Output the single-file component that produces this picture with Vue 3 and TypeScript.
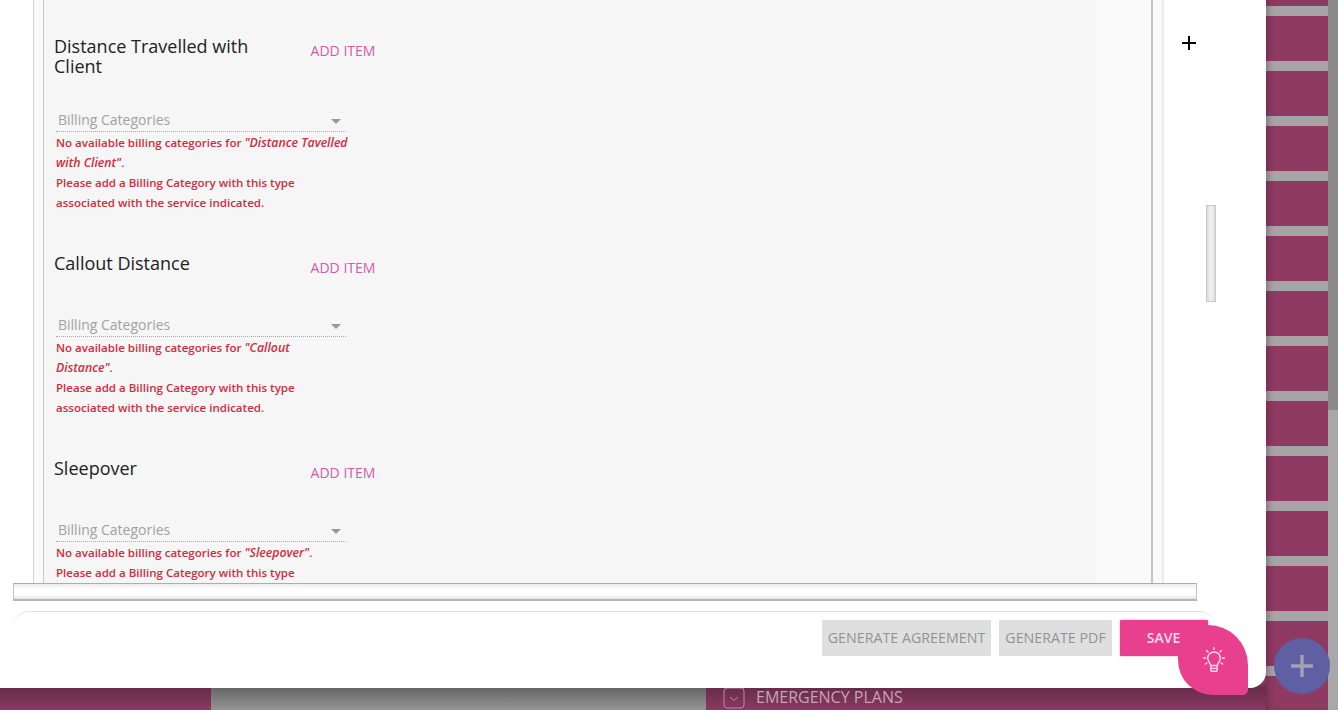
<script setup lang="ts">
interface Section {
  title: string
  missing: string
}
const sections: Section[] = [
  { title: 'Distance Travelled with Client', missing: '"Distance Tavelled with Client"' },
  { title: 'Callout Distance', missing: '"Callout Distance"' },
  { title: 'Sleepover', missing: '"Sleepover"' },
]
</script>

<template>
  <div class="page">
    <div class="backdrop">
      <div class="bg-pink bg-left"></div>
      <div class="bg-grey"></div>
      <div class="bg-pink bg-mid">
        <svg class="plans-icon" width="22" height="22" viewBox="0 0 22 22" fill="none">
          <rect x="1" y="1" width="20" height="20" rx="3" stroke="#b98aa5" stroke-width="1" />
          <path d="M7 10l4 3.5L15 10" stroke="#b98aa5" stroke-width="1" />
        </svg>
        <span class="plans-text">EMERGENCY PLANS</span>
      </div>
      <div class="bg-stripes"></div>
      <div class="bg-scroll"></div>
    </div>

    <div class="modal">
      <div class="viewport">
        <div class="frame">
          <div class="panel">
            <div class="content">
              <section v-for="s in sections" :key="s.title" class="block">
                <div class="head">
                  <h3 class="title">{{ s.title }}</h3>
                  <button class="add" type="button">ADD ITEM</button>
                </div>
                <div class="field">
                  <div class="select">
                    <span>Billing Categories</span>
                    <i class="caret"></i>
                  </div>
                  <p class="error">
                    No available billing categories for <em>{{ s.missing }}</em>.<br />
                    Please add a Billing Category with this type associated with the service indicated.
                  </p>
                </div>
              </section>
            </div>
          </div>
        </div>
      </div>
      <div class="hbar"></div>
      <div class="footer">
        <button class="btn grey wide" type="button">GENERATE AGREEMENT</button>
        <button class="btn grey pdf" type="button">GENERATE PDF</button>
        <button class="btn save" type="button">SAVE</button>
      </div>
      <svg class="cross" width="16" height="16" viewBox="0 0 16 16">
        <path d="M8 1v14M1 8h14" stroke="#000" stroke-width="2" />
      </svg>
      <div class="vbar"></div>
    </div>

    <button class="fab-idea" type="button" aria-label="Tips">
      <svg width="30" height="30" viewBox="0 0 30 30" fill="none" stroke="#fbdcea" stroke-width="1.4" stroke-linecap="round" stroke-linejoin="round">
        <path d="M11.6 20.5c0-2.4-2.9-3.8-2.9-7.2a6.3 6.3 0 0 1 12.6 0c0 3.4-2.9 4.8-2.9 7.2z" />
        <path d="M11.8 20.5v4.4a1.4 1.4 0 0 0 1.4 1.4h3.6a1.4 1.4 0 0 0 1.4-1.4v-4.4M11.8 23.4h6.4" />
        <path d="M15 2.6v2M7.6 5.6l1.4 1.4M22.4 5.6L21 7M4.6 13h2M23.4 13h2M6.4 19l1.5-1M23.6 19l-1.5-1" />
      </svg>
    </button>
    <button class="fab-plus" type="button" aria-label="Add">
      <svg width="24" height="24" viewBox="0 0 24 24">
        <path d="M12 1v22M1 12h22" stroke="#a3a1b5" stroke-width="3.4" />
      </svg>
    </button>
  </div>
</template>

<style>
html,
body {
  margin: 0;
  overflow: hidden;
}
</style>

<style scoped>
.page {
  position: relative;
  width: 1338px;
  height: 710px;
  overflow: hidden;
  font-family: "Open Sans", "Liberation Sans", sans-serif;
}
.backdrop {
  display: flex;
  height: 100%;
}
.bg-pink {
  background: linear-gradient(to bottom, #8e3a63 680px, #682c4b 688px, #8a3a62 710px);
}
.bg-left {
  width: 211px;
}
.bg-grey {
  width: 495px;
  background: linear-gradient(to bottom, #666 688px, #959595 710px);
}
.bg-mid {
  width: 560px;
  display: flex;
  align-items: flex-end;
  gap: 11px;
  padding: 0 0 2px 17px;
  box-sizing: border-box;
  color: #c6a3b6;
  font-size: 16px;
  line-height: 20px;
}
.plans-icon {
  flex: none;
  margin-bottom: -1px;
}
.plans-text {
  margin-bottom: 1px;
}
.bg-stripes {
  width: 62px;
  background: repeating-linear-gradient(
      to bottom,
      #a6a4a5 0,
      #a6a4a5 10px,
      #8e3a63 10px,
      #8e3a63 55px
    )
    0 6px;
  box-shadow: inset 6px 0 6px -4px rgba(60, 20, 40, 0.35);
}
.bg-scroll {
  width: 10px;
  background: linear-gradient(to bottom, #8a8a8a 410px, #a8a8a8 410px);
}
.modal {
  position: absolute;
  left: 0;
  top: 0;
  width: 1266px;
  height: 688px;
  background: #fff;
  border-bottom-right-radius: 16px;
  display: flex;
  flex-direction: column;
}
.viewport {
  height: 583px;
  overflow: hidden;
  padding-left: 33px;
  flex: none;
}
.frame {
  width: 1130px;
  height: 100%;
  box-sizing: border-box;
  background: #fafafa;
  border-left: 1px solid #d2d2d2;
  border-right: 1px solid #e6e6e6;
  padding: 0 0 0 9px;
  box-shadow: 1px 0 1px #f2f2f2;
}
.panel {
  width: 1110px;
  height: 100%;
  box-sizing: border-box;
  border-left: 1px solid #c8c8c8;
  border-right: 2px solid #c6c6c6;
  background: linear-gradient(to right, #f6f6f6 1052px, #fafafa 1052px);
  overflow: hidden;
}
.content {
  padding: 33px 0 0 10px;
}
.block {
  width: 335px;
  margin-bottom: 37px;
}
.head {
  display: flex;
  align-items: flex-start;
  gap: 0;
}
.title {
  width: 245px;
  margin: 3px 0 5px;
  font-size: 18px;
  line-height: 20px;
  font-weight: 400;
  color: #222;
}
.add {
  width: 86px;
  height: 36px;
  flex: none;
  margin-left: 1px;
  border: 0;
  border-radius: 3px;
  background: #f7f6f7;
  color: #d35aa8;
  font: 400 14px/36px "Open Sans", "Liberation Sans", sans-serif;
  padding: 0;
}
.field {
  margin-top: 28px;
  width: 292.5px;
  padding-left: 2px;
}
.select {
  width: 290px;
  height: 23px;
  box-sizing: border-box;
  padding: 0 5px 0 2px;
  display: flex;
  align-items: center;
  justify-content: space-between;
  border-bottom: 1px dotted #a8a8a8;
  color: #a2a2a2;
  font-size: 14px;
  line-height: 20px;
}
.caret {
  width: 0;
  height: 0;
  border-left: 5px solid transparent;
  border-right: 5px solid transparent;
  border-top: 5px solid #9a9a9a;
  margin-top: 2px;
}
.error {
  margin: 1px 0 0;
  color: #d02c3c;
  font-size: 11.55px;
  line-height: 20px;
  font-weight: 600;
}
.error em {
  font-size: 12.3px;
}
.hbar {
  flex: none;
  width: 1184px;
  height: 18px;
  margin-left: 13px;
  box-sizing: border-box;
  border: 1px solid #c4c4c4;
  border-top-color: #adadad;
  border-bottom: 2px solid #b4b4b4;
  background: linear-gradient(to bottom, #ececec, #fff 35%, #fff 70%, #e4e4e4);
}
.footer {
  flex: none;
  margin: 10px 0 0 13px;
  width: 1202px;
  height: 77px;
  box-sizing: border-box;
  border-top: 1px solid #e2e2e2;
  border-radius: 16px 16px 0 0;
  display: flex;
  align-items: flex-start;
  justify-content: flex-end;
  gap: 8px;
  padding: 8px 7px 0 0;
}
.btn {
  height: 36px;
  border: 0;
  padding: 0;
  border-radius: 1px;
  font: 400 14.25px/36px "Open Sans", "Liberation Sans", sans-serif;
}
.grey {
  background: #dfdfdf;
  color: #939393;
}
.wide {
  width: 169px;
}
.pdf {
  width: 113px;
}
.save {
  width: 88px;
  background: #e8408f;
  color: #fcdcea;
  font-weight: 600;
  font-size: 14px;
  padding-right: 1px;
  box-shadow: 0 0 3px rgba(232, 64, 143, 0.4);
}
.cross {
  position: absolute;
  left: 1181px;
  top: 35px;
}
.vbar {
  position: absolute;
  left: 1206px;
  top: 205px;
  width: 10px;
  height: 97px;
  box-sizing: border-box;
  border: 1px solid #c9c9c9;
  background: linear-gradient(to right, #dcdcdc, #f2f2f2 50%, #dcdcdc);
}
.fab-idea {
  position: absolute;
  left: 1178px;
  top: 625px;
  width: 70px;
  height: 70px;
  border: 0;
  padding: 0 0 0 2px;
  border-radius: 30px 40px 5px 35px;
  background: #e8408f;
  display: flex;
  align-items: center;
  justify-content: center;
}
.fab-plus {
  position: absolute;
  left: 1274px;
  top: 638px;
  width: 56px;
  height: 56px;
  border: 0;
  padding: 0;
  border-radius: 50%;
  background: #5f5fa3;
  display: flex;
  align-items: center;
  justify-content: center;
}
</style>
